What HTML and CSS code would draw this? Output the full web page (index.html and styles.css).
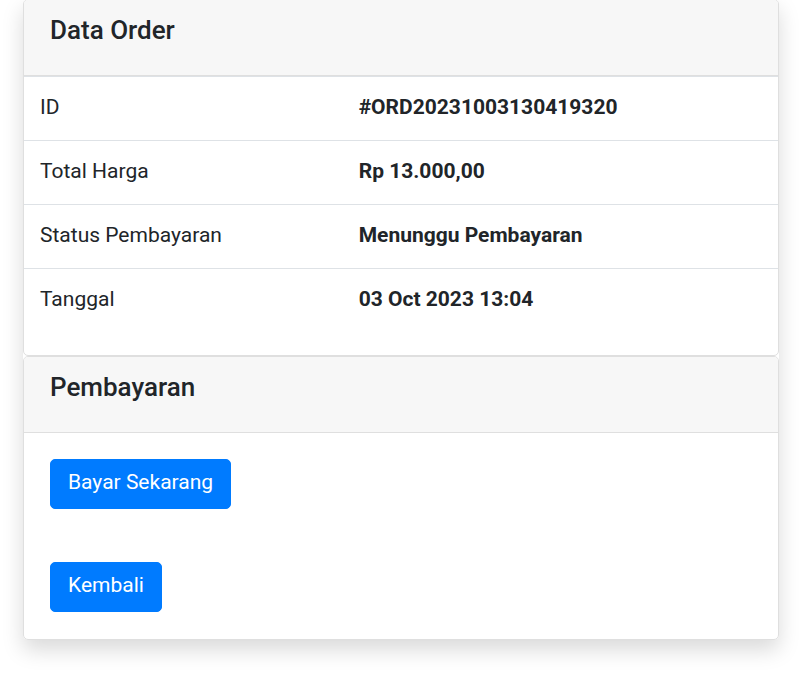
FILE: index.html
```html
<!DOCTYPE html>
<html lang="id">
<head>
<meta charset="utf-8">
<meta name="viewport" content="width=device-width, initial-scale=1">
<title>Data Order</title>
<link rel="stylesheet" href="styles.css">
</head>
<body>
<main class="order">
  <section class="card">
    <header class="card-header"><h1 class="card-title">Data Order</h1></header>
    <table class="details">
      <tbody>
        <tr><th scope="row">ID</th><td>#ORD20231003130419320</td></tr>
        <tr><th scope="row">Total Harga</th><td>Rp 13.000,00</td></tr>
        <tr><th scope="row">Status Pembayaran</th><td>Menunggu Pembayaran</td></tr>
        <tr><th scope="row">Tanggal</th><td>03 Oct 2023 13:04</td></tr>
      </tbody>
    </table>
  </section>
  <section class="card">
    <header class="card-header"><h2 class="card-title">Pembayaran</h2></header>
    <div class="card-body">
      <button class="btn" type="button">Bayar Sekarang</button>
      <a class="btn" href="#">Kembali</a>
    </div>
  </section>
</main>
</body>
</html>
```

FILE: styles.css
```css
* {
  box-sizing: border-box;
}

body {
  display: flow-root;
  margin: 0;
  background: #fff;
  color: #212529;
  font-family: Roboto, "Liberation Sans", sans-serif;
  font-size: 21px;
  line-height: 32px;
}

.order {
  margin: -1px 21px 35px 23px;
  border-radius: 5px;
  box-shadow: 0 10px 21px rgba(0, 0, 0, 0.15);
}

.card {
  border: 1px solid #dfdfdf;
  border-radius: 5px;
  background: #fff;
  overflow: hidden;
}

.card-header {
  padding: 15px 26px 29px;
  border-bottom: 1px solid #dfdfdf;
  background: #f7f7f7;
}

.card-title {
  margin: 0;
  font-size: 26px;
  font-weight: 500;
  line-height: 31px;
}

.details {
  width: 100%;
  margin-bottom: 23px;
  border-collapse: collapse;
  table-layout: fixed;
}

.details th,
.details td {
  padding: 14px 16px 17px;
  border-top: 1px solid #dee2e6;
  text-align: left;
}

.details th {
  width: 42%;
  font-weight: 400;
}

.details td {
  padding-left: 18px;
  font-weight: 700;
}

.card-body {
  display: flex;
  flex-direction: column;
  align-items: flex-start;
  gap: 53px;
  padding: 26px 26px 27px;
}

.btn {
  padding: 6px 17px 10px;
  border: 1px solid #007bff;
  border-radius: 5px;
  background: #007bff;
  color: #fff;
  font: inherit;
  text-decoration: none;
  cursor: pointer;
}
```
